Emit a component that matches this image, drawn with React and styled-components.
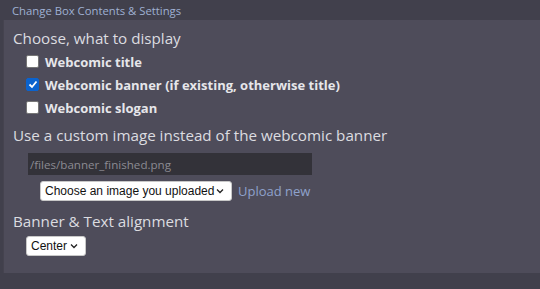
import React from "react";
import styled, { createGlobalStyle } from "styled-components";

const Global = createGlobalStyle`
  html, body { margin: 0; padding: 0; background: #41404c; }
  body { font-family: "Open Sans", "DejaVu Sans", sans-serif; width: 540px; height: 289px; overflow: hidden; }
`;

const Page = styled.div`
  width: 540px;
  height: 289px;
  background: #41404c;
  display: flex;
  flex-direction: column;
`;

const TitleBar = styled.div`
  height: 20px;
  display: flex;
  align-items: center;
  padding-left: 12px;
  font-size: 11.3px;
  color: #9fb0d2;
`;

const Panel = styled.div`
  margin-left: 3px;
  height: 253px;
  background: #4e4c5a;
  border-left: 1px solid #45434f;
  padding: 7px 0 0 9px;
  box-sizing: border-box;
  display: flex;
  flex-direction: column;
`;

const Heading = styled.div`
  font-size: 15.2px;
  color: #dcdce0;
  line-height: 22px;
  margin-top: ${(p) => p.$mt || 0}px;
`;

const CheckList = styled.div`
  display: flex;
  flex-direction: column;
  margin-top: 1px;
`;

const CheckRow = styled.label`
  display: flex;
  align-items: center;
  height: 23px;
  padding-left: 13px;
  font-size: 13px;
  font-weight: 700;
  color: #e6e6ea;
`;

const Box = styled.span`
  width: 13px;
  height: 13px;
  box-sizing: border-box;
  border-radius: 2px;
  background: ${(p) => (p.$checked ? "#0b63ce" : "#ffffff")};
  border: 1px solid ${(p) => (p.$checked ? "#0b63ce" : "#767676")};
  margin-right: 6px;
  display: flex;
  align-items: center;
  justify-content: center;
`;

const TextInput = styled.div`
  margin: 7px 0 0 15px;
  width: 284px;
  height: 22px;
  background: #333239;
  color: #8b8a92;
  font-size: 11.6px;
  display: flex;
  align-items: center;
  padding-left: 2px;
  box-sizing: border-box;
`;

const SelectRow = styled.div`
  display: flex;
  align-items: center;
  gap: 6px;
  margin: ${(p) => p.$mt}px 0 0 ${(p) => p.$ml}px;
`;

const Select = styled.div`
  height: 20px;
  background: #ffffff;
  border: 1px solid #c8c8c8;
  border-radius: 3px;
  box-sizing: border-box;
  display: flex;
  align-items: center;
  padding: 0 7px 0 4px;
  font-family: "Liberation Sans", Arial, sans-serif;
  font-size: 12px;
  color: #111;
  white-space: nowrap;
  width: ${(p) => p.$w}px;
  justify-content: space-between;
`;

const Link = styled.span`
  font-size: 13px;
  color: #8fa2cc;
`;

const ChevronWrap = styled.span`
  display: flex;
  flex-shrink: 0;
`;

const Chevron = () => (
  <ChevronWrap>
    <svg width="8" height="6" viewBox="0 0 8 6">
      <path d="M1 1.5 L4 4.5 L7 1.5" fill="none" stroke="#222" strokeWidth="1.3" />
    </svg>
  </ChevronWrap>
);

const Check = () => (
  <svg width="10" height="9" viewBox="0 0 10 9">
    <path d="M1.5 4.5 L4 7 L8.5 1.5" fill="none" stroke="#fff" strokeWidth="1.8" />
  </svg>
);

export default function App() {
  return (
    <Page>
      <Global />
      <TitleBar>Change Box Contents &amp; Settings</TitleBar>
      <Panel>
        <Heading>Choose, what to display</Heading>
        <CheckList>
          <CheckRow>
            <Box />
            Webcomic title
          </CheckRow>
          <CheckRow>
            <Box $checked>
              <Check />
            </Box>
            Webcomic banner (if existing, otherwise title)
          </CheckRow>
          <CheckRow>
            <Box />
            Webcomic slogan
          </CheckRow>
        </CheckList>
        <Heading $mt={5}>Use a custom image instead of the webcomic banner</Heading>
        <TextInput>/files/banner_finished.png</TextInput>
        <SelectRow $ml={27} $mt={6}>
          <Select $w={192}>
            Choose an image you uploaded
            <Chevron />
          </Select>
          <Link>Upload new</Link>
        </SelectRow>
        <Heading $mt={9}>Banner &amp; Text alignment</Heading>
        <SelectRow $ml={13} $mt={4}>
          <Select $w={60}>
            Center
            <Chevron />
          </Select>
        </SelectRow>
      </Panel>
    </Page>
  );
}
